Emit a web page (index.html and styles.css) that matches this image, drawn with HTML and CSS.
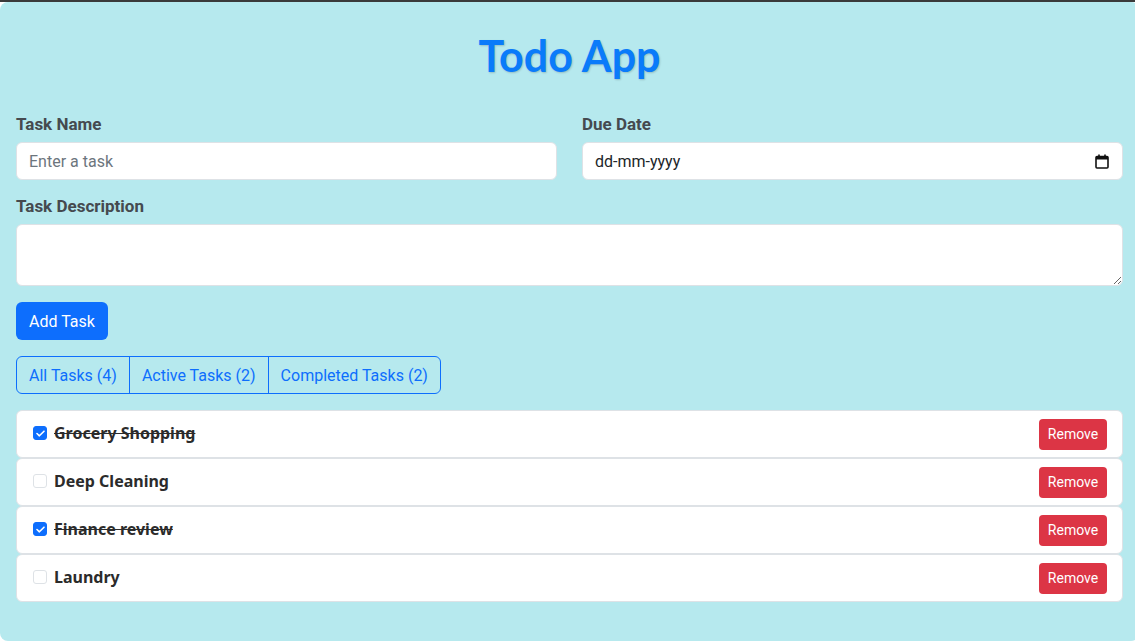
FILE: index.html
```html
<!DOCTYPE html>
<html lang="en">
<head>
<meta charset="utf-8">
<title>Todo App</title>
<link rel="stylesheet" href="styles.css">
</head>
<body>
<div class="topbar"></div>
<main class="app">
  <h1 class="title">Todo App</h1>
  <form class="task-form">
    <div class="row">
      <div class="field">
        <label class="label" for="name">Task Name</label>
        <input id="name" class="control" type="text" placeholder="Enter a task">
      </div>
      <div class="field">
        <label class="label">Due Date</label>
        <div class="control date">
          <span>dd-mm-yyyy</span>
          <svg class="cal" width="14" height="15" viewBox="0 0 14 15"><rect x="1" y="2.5" width="12" height="11.5" rx="1" fill="none" stroke="#111" stroke-width="1.6"/><rect x="1" y="2.5" width="12" height="3" fill="#111"/><rect x="3.2" y="0.5" width="1.6" height="3" fill="#111"/><rect x="9.2" y="0.5" width="1.6" height="3" fill="#111"/></svg>
        </div>
      </div>
    </div>
    <div class="field last">
      <label class="label" for="desc">Task Description</label>
      <textarea id="desc" class="control area"></textarea>
    </div>
    <div><button type="button" class="btn-primary">Add Task</button></div>
  </form>
  <div class="filters">
    <button class="filter">All Tasks (4)</button>
    <button class="filter">Active Tasks (2)</button>
    <button class="filter">Completed Tasks (2)</button>
  </div>
  <ul class="list">
    <li class="item"><span class="check on"><svg width="9" height="7" viewBox="0 0 9 7"><path d="M1 3.5 L3.4 5.8 L8 1.2" fill="none" stroke="#fff" stroke-width="1.6" stroke-linecap="round" stroke-linejoin="round"/></svg></span><span class="name done">Grocery Shopping</span><button class="remove">Remove</button></li>
    <li class="item"><span class="check"></span><span class="name">Deep Cleaning</span><button class="remove">Remove</button></li>
    <li class="item"><span class="check on"><svg width="9" height="7" viewBox="0 0 9 7"><path d="M1 3.5 L3.4 5.8 L8 1.2" fill="none" stroke="#fff" stroke-width="1.6" stroke-linecap="round" stroke-linejoin="round"/></svg></span><span class="name done">Finance review</span><button class="remove">Remove</button></li>
    <li class="item"><span class="check"></span><span class="name">Laundry</span><button class="remove">Remove</button></li>
  </ul>
</main>
</body>
</html>
```
FILE: styles.css
```css
* { box-sizing: border-box; }
html, body { margin: 0; padding: 0; }
body {
  background: #ffffff;
  overflow: hidden;
  font-family: Roboto, "Liberation Sans", sans-serif;
  width: 1135px;
  height: 642px;
}
.topbar { height: 2px; background: #3a3a3a; }
.app {
  width: 1139px;
  height: 639px;
  background: #b6e9ee;
  border-radius: 8px;
  padding: 16px 16px 0 16px;
}
.title {
  margin: 0;
  padding-top: 13px;
  height: 94px;
  text-align: center;
  font-family: Lato, "Open Sans", sans-serif;
  font-weight: 700;
  font-size: 43px;
  line-height: 50px;
  color: #0a7bfa;
  text-shadow: 1px 1px 2px rgba(0,0,0,0.18);
}
.task-form { display: flex; flex-direction: column; }
.row { display: flex; gap: 25px; }
.row .field { flex: 1; }
.field { display: flex; flex-direction: column; margin-bottom: 14px; }
.field.last { margin-bottom: 16px; }
.label {
  font-weight: 700;
  font-size: 17px;
  color: #454a4f;
  line-height: 24px;
  margin-bottom: 6px;
}
.control {
  height: 38px;
  border: 1px solid #dee2e6;
  border-radius: 6px;
  background: #fff;
  padding: 6px 12px;
  font-family: Roboto, sans-serif;
  font-size: 16px;
  color: #212529;
  outline: none;
}
.control::placeholder { color: #6c757d; }
.date {
  display: flex;
  align-items: center;
  justify-content: space-between;
}
.cal { margin-right: 1px; }
.area { height: 62px; resize: vertical; }
.btn-primary {
  height: 38px;
  padding: 0 13px;
  border: none;
  border-radius: 6px;
  background: #0d6efd;
  color: #fff;
  font-family: Roboto, sans-serif;
  font-size: 16px;
}
.filters {
  display: inline-flex;
  margin-top: 16px;
  margin-bottom: 16px;
}
.filter {
  height: 38px;
  padding: 0 12px;
  background: transparent;
  border: 1px solid #0d6efd;
  color: #0d6efd;
  font-family: Roboto, sans-serif;
  font-size: 16px;
  margin-left: -1px;
}
.filter:first-child { margin-left: 0; border-radius: 6px 0 0 6px; }
.filter:last-child { border-radius: 0 6px 6px 0; }
.list {
  list-style: none;
  margin: 0;
  padding: 0;
  width: 1107px;
}
.item {
  display: flex;
  align-items: center;
  height: 48px;
  background: #fff;
  border: 1px solid #dee2e6;
  border-radius: 6px;
  padding: 0 15px 0 16px;
}
.check {
  width: 14px;
  height: 14px;
  border: 1px solid #dee2e6;
  border-radius: 3px;
  background: #fff;
  display: inline-flex;
  align-items: center;
  justify-content: center;
  margin-right: 7px;
  margin-bottom: 2px;
}
.check.on { background: #0d6efd; border-color: #0d6efd; }
.name {
  font-family: "Noto Sans", "Open Sans", sans-serif;
  font-weight: 700;
  font-size: 16px;
  line-height: 22px;
  color: #2b2b2b;
  flex: 1;
  margin-bottom: 3px;
}
.name.done { text-decoration: line-through; }
.remove {
  height: 31px;
  width: 68px;
  padding: 0;
  border: none;
  border-radius: 4px;
  background: #dc3545;
  color: #fff;
  font-family: Roboto, sans-serif;
  font-size: 14px;
}
```
